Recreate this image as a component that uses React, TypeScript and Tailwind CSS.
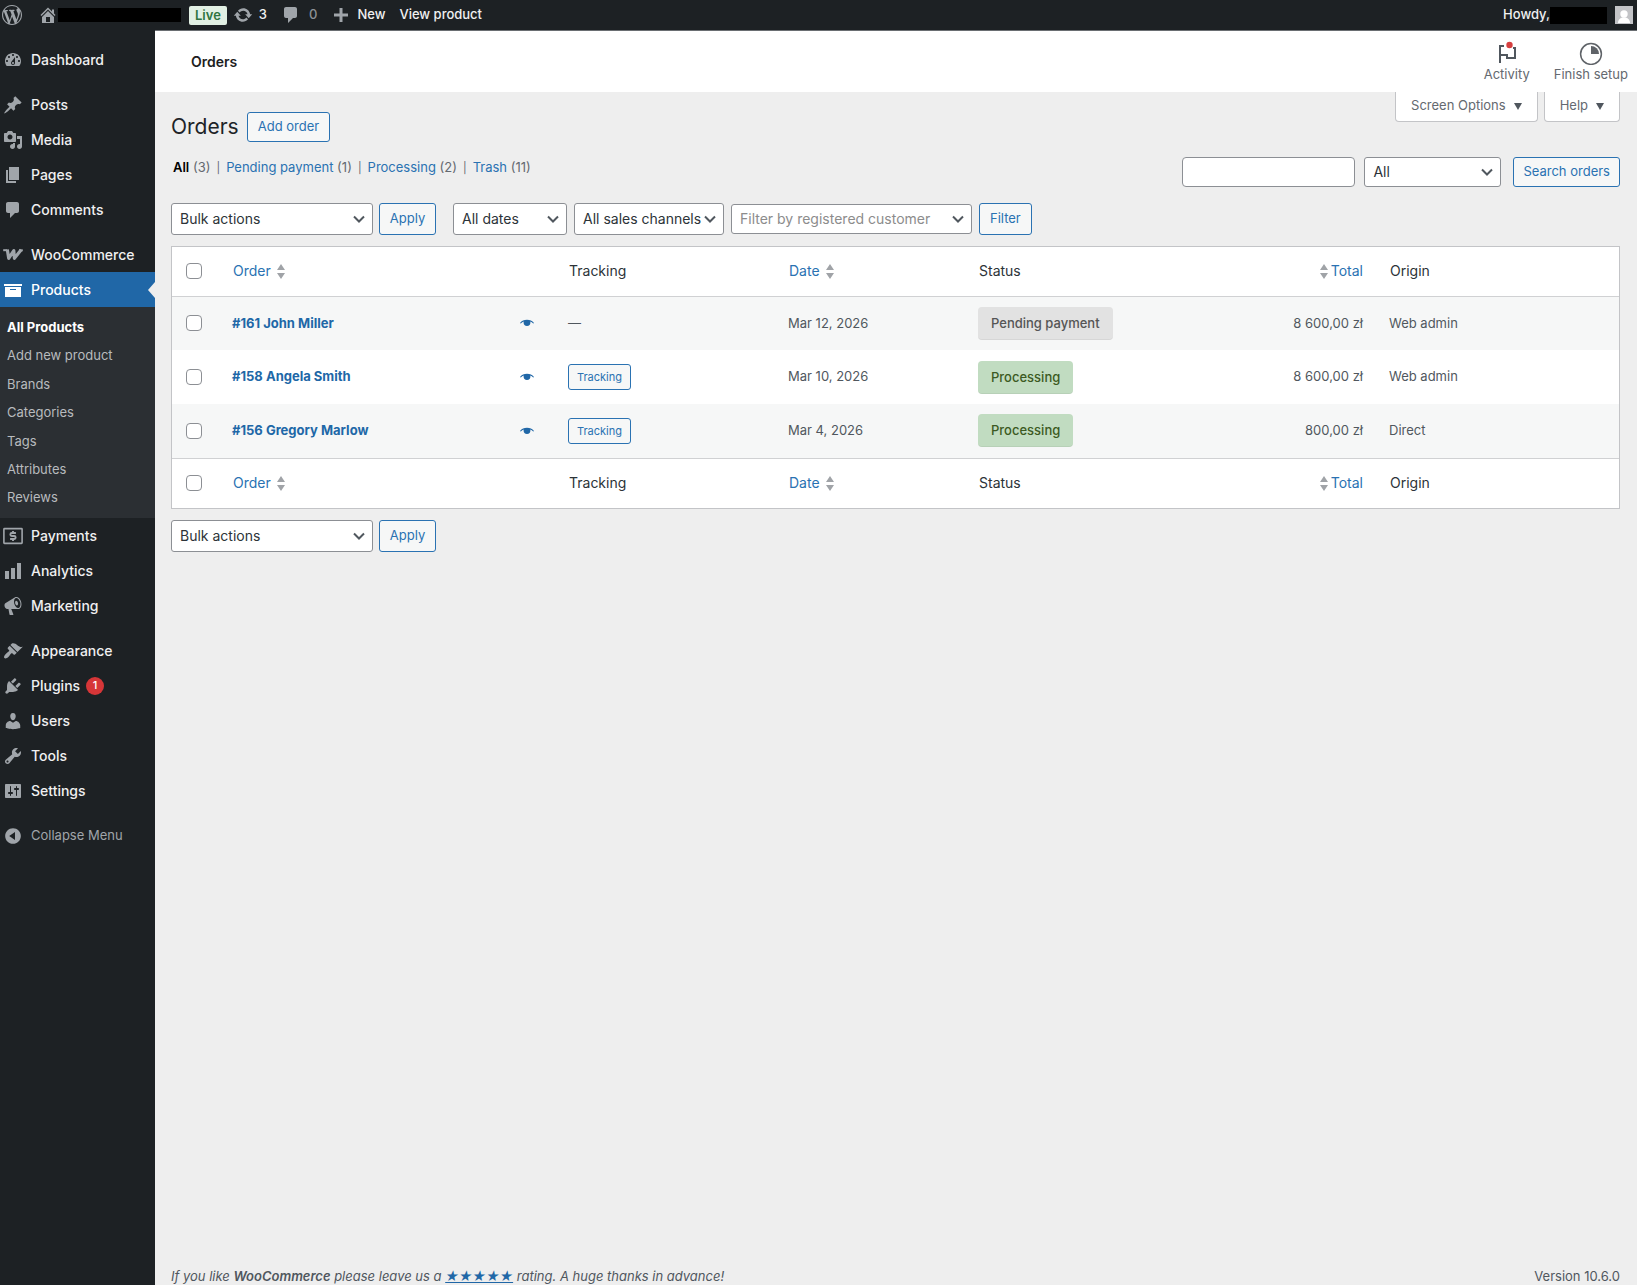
import { useState } from "react";
import { clsx } from "clsx";

import type { ReactNode } from "react";

type Order = {
  id: number;
  customer: string;
  tracking: boolean;
  date: string;
  status: "pending" | "processing";
  total: string;
  origin: string;
};

type MenuItem = { label: string; icon: ReactNode; badge?: number };

const ICONS = {
  wordpress:
    "M20 10c0-5.51-4.49-10-10-10C4.48 0 0 4.49 0 10c0 5.52 4.48 10 10 10 5.51 0 10-4.48 10-10zM7.78 15.37L4.37 6.22c.55-.02 1.17-.08 1.17-.08.5-.06.44-1.13-.06-1.11 0 0-1.45.11-2.37.11-.18 0-.37 0-.58-.01C4.12 2.69 6.87 1.11 10 1.11c2.33 0 4.45.87 6.05 2.34-.68-.11-1.65.39-1.65 1.58 0 .74.45 1.36.9 2.1.35.61.55 1.36.55 2.46 0 1.49-1.4 5-1.4 5l-3.03-8.37c.54-.02.82-.17.82-.17.5-.05.44-1.25-.06-1.22 0 0-1.44.12-2.38.12-.87 0-2.33-.12-2.33-.12-.5-.03-.56 1.2-.06 1.22l.92.08 1.26 3.41zM17.41 10c.24-.64.74-1.87.43-4.25.7 1.29 1.05 2.71 1.05 4.25 0 3.29-1.73 6.24-4.4 7.78.97-2.59 1.94-5.2 2.92-7.78zM6.1 18.09C3.12 16.65 1.11 13.53 1.11 10c0-1.3.23-2.48.72-3.59C3.25 10.3 4.67 14.2 6.1 18.09zm4.03-6.63l2.58 6.98c-.86.29-1.76.45-2.71.45-.79 0-1.57-.11-2.29-.33.81-2.38 1.62-4.74 2.42-7.1z",
  home: "M16 8.5l1.53 1.53-1.06 1.06L10 4.6l-6.47 6.49-1.06-1.06L10 2.5l4 4v-2h2v4zm-6-2.46l6 5.99V18H4v-5.97zM12 17v-5H8v5h4z",
  update:
    "M10.2 3.28c3.53 0 6.43 2.61 6.92 6h2.08l-3.5 4-3.5-4h2.32c-.45-1.97-2.21-3.45-4.32-3.45-1.45 0-2.73.71-3.54 1.78L4.95 5.66C6.23 4.2 8.11 3.28 10.2 3.28zm-.4 13.44c-3.52 0-6.43-2.61-6.92-6H.8l3.5-4c1.17 1.33 2.33 2.67 3.5 4H5.48c.45 1.97 2.21 3.45 4.32 3.45 1.45 0 2.73-.71 3.54-1.78l1.71 1.95c-1.28 1.46-3.15 2.38-5.25 2.38z",
  plus: "M17 8.5v3h-5.5V17h-3v-5.5H3v-3h5.5V3h3v5.5H17z",
  dashboard:
    "M3.76 16h12.48c1.1-1.37 1.76-3.11 1.76-5 0-4.42-3.58-8-8-8s-8 3.58-8 8c0 1.89.66 3.63 1.76 5zM10 4c.55 0 1 .45 1 1s-.45 1-1 1-1-.45-1-1 .45-1 1-1zM6 6c.55 0 1 .45 1 1s-.45 1-1 1-1-.45-1-1 .45-1 1-1zm8 0c.55 0 1 .45 1 1s-.45 1-1 1-1-.45-1-1 .45-1 1-1zm-5.37 5.55L12 7v6c0 1.1-.9 2-2 2s-2-.9-2-2c0-.57.24-1.08.63-1.45zM4 10c.55 0 1 .45 1 1s-.45 1-1 1-1-.45-1-1 .45-1 1-1zm12 0c.55 0 1 .45 1 1s-.45 1-1 1-1-.45-1-1 .45-1 1-1zm-5 3c0-.55-.45-1-1-1s-1 .45-1 1 .45 1 1 1 1-.45 1-1z",
  post: "M10.44 3.02l1.82-1.82 6.36 6.35-1.83 1.82c-1.05-.68-2.48-.57-3.41.36l-.75.75c-.92.93-1.04 2.35-.35 3.41l-1.83 1.82-2.41-2.41-2.8 2.79c-.42.42-3.38 2.71-3.8 2.29s1.86-3.39 2.28-3.81l2.79-2.79L4.1 9.36l1.83-1.82c1.05.69 2.48.57 3.4-.36l.75-.75c.93-.92 1.05-2.35.36-3.41z",
  media:
    "M13 11V4c0-.55-.45-1-1-1h-1.67L9 1H5L3.67 3H2c-.55 0-1 .45-1 1v7c0 .55.45 1 1 1h10c.55 0 1-.45 1-1zM7 4.5c1.38 0 2.5 1.12 2.5 2.5S8.38 9.5 7 9.5 4.5 8.38 4.5 7 5.62 4.5 7 4.5zM14 6h5v10.5c0 1.38-1.12 2.5-2.5 2.5S14 17.88 14 16.5s1.12-2.5 2.5-2.5c.17 0 .34.02.5.05V9h-3V6zm-4 8.05V13h2v3.5c0 1.38-1.12 2.5-2.5 2.5S7 17.88 7 16.5 8.12 14 9.5 14c.17 0 .34.02.5.05z",
  page: "M6 15V2h10v13H6zm-1 1h8v2H3V5h2v11z",
  comment:
    "M5 2h9c1.1 0 2 .9 2 2v7c0 1.1-.9 2-2 2h-2l-5 5v-5H5c-1.1 0-2-.9-2-2V4c0-1.1.9-2 2-2z",
  archive: "M19 4v2H1V4h18zM2 7h16v10H2V7zm11 3V9H7v1h6z",
  chart: "M18 18V2h-4v16h4zm-6 0V7H8v11h4zm-6 0v-8H2v8h4z",
  megaphone:
    "M18.15 5.94c.46 1.62.38 3.22-.02 4.48-.42 1.28-1.26 2.18-2.3 2.48-.16.06-.26.06-.4.06-.06.02-.12.02-.18.02-.06.02-.14.02-.22.02h-6.8l2.22 5.5c.02.14-.06.26-.14.34-.08.1-.24.16-.34.16H6.95c-.1 0-.26-.06-.34-.16-.08-.08-.16-.2-.14-.34l-1-5.5H4.25l-.02-.02c-.5.06-1.08-.18-1.54-.62s-.88-1.08-1.06-1.88c-.24-.8-.2-1.56-.02-2.2.18-.62.58-1.08 1.06-1.3l.02-.02 9-5.4c.1-.06.18-.1.24-.16.06-.04.14-.08.24-.12.16-.08.28-.12.5-.18 1.04-.3 2.24.1 3.22.98s1.84 2.24 2.26 3.86zm-2.58 5.98h-.02c.4-.1.74-.34 1.04-.7.58-.7.86-1.76.86-3.04 0-.64-.1-1.3-.28-1.98-.34-1.36-1.02-2.5-1.78-3.24s-1.68-1.1-2.46-.88c-.82.22-1.4.96-1.7 2-.32 1.04-.28 2.36.06 3.72.38 1.36 1 2.5 1.8 3.24.78.74 1.62 1.1 2.48.88zm-2.54-7.08c.22-.04.42-.02.62.04.38.16.76.48 1.02 1s.42 1.2.42 1.78c0 .3-.04.56-.12.8-.18.48-.44.84-.86.94-.34.1-.8-.06-1.14-.4s-.64-.86-.78-1.5c-.18-.62-.12-1.24.02-1.72s.48-.84.82-.94z",
  appearance:
    "M14.48 11.06L7.41 3.99l1.5-1.5c.5-.56 2.3-.47 3.51.32 1.21.8 1.43 1.28 2.91 2.1 1.18.64 2.45 1.26 4.45.85zm-.71.71L6.7 4.7 4.93 6.47c-.39.39-.39 1.02 0 1.41l1.06 1.06c.39.39.39 1.03 0 1.42-.6.6-1.43 1.11-2.21 1.69-.35.26-.7.53-1.01.84C1.43 14.23.4 16.08 1.4 17.07c.99 1 2.84-.03 4.18-1.36.31-.31.58-.66.85-1.02.57-.78 1.08-1.61 1.69-2.21.39-.39 1.02-.39 1.41 0l1.06 1.06c.39.39 1.02.39 1.41 0z",
  plugins:
    "M13.11 4.36L9.87 7.6 8 5.73l3.24-3.24c.35-.34 1.05-.2 1.56.32.52.51.66 1.21.31 1.55zm-8 1.77l.91-1.12 9.01 9.01-1.19.84c-.71.71-2.63 1.16-3.82 1.16H6.14L4.9 17.26c-.59.59-1.54.59-2.12 0-.59-.58-.59-1.53 0-2.12l1.24-1.24v-3.88c0-1.13.4-3.19 1.09-3.89zm7.26 3.97l3.24-3.24c.34-.35 1.04-.21 1.55.31.52.51.66 1.21.31 1.55l-3.24 3.25z",
  users:
    "M10 9.25c-2.27 0-2.73-3.44-2.73-3.44C7 4.02 7.82 2 9.97 2c2.16 0 2.98 2.02 2.71 3.81 0 0-.41 3.44-2.68 3.44zm0 2.57L12.72 10c2.39 0 4.52 2.33 4.52 4.53v2.49s-3.65 1.13-7.24 1.13c-3.65 0-7.24-1.13-7.24-1.13v-2.49c0-2.25 1.94-4.48 4.47-4.48z",
  tools:
    "M16.68 9.77c-1.34 1.34-3.3 1.67-4.95.99l-5.41 6.52c-.99.99-2.59.99-3.58 0s-.99-2.59 0-3.57l6.52-5.42c-.68-1.65-.35-3.61.99-4.95 1.28-1.28 3.12-1.62 4.72-1.06l-2.89 2.89 2.82 2.82 2.86-2.87c.53 1.58.18 3.39-1.08 4.65zM3.81 16.21c.4.39 1.04.39 1.43 0 .4-.4.4-1.04 0-1.43-.39-.4-1.03-.4-1.43 0-.39.39-.39 1.03 0 1.43z",
  settings:
    "M18 16V4c0-.55-.45-1-1-1H3c-.55 0-1 .45-1 1v12c0 .55.45 1 1 1h14c.55 0 1-.45 1-1zM8 11h1c.55 0 1 .45 1 1s-.45 1-1 1H8v1.5c0 .28-.22.5-.5.5s-.5-.22-.5-.5V13H6c-.55 0-1-.45-1-1s.45-1 1-1h1V5.5c0-.28.22-.5.5-.5s.5.22.5.5V11zm5-2h-1c-.55 0-1-.45-1-1s.45-1 1-1h1V5.5c0-.28.22-.5.5-.5s.5.22.5.5V7h1c.55 0 1 .45 1 1s-.45 1-1 1h-1v5.5c0 .28-.22.5-.5.5s-.5-.22-.5-.5V9z",
  collapse:
    "M10 2.16c4.33 0 7.84 3.51 7.84 7.84s-3.51 7.84-7.84 7.84S2.16 14.33 2.16 10 5.71 2.16 10 2.16zm2 11.72V6.12L6.18 9.97z",
};

function Icon({ name, className }: { name: keyof typeof ICONS; className?: string }) {
  return (
    <svg viewBox="0 0 20 20" fill="currentColor" className={clsx("size-5 shrink-0", className)} aria-hidden="true">
      <path fillRule="evenodd" d={ICONS[name]} />
    </svg>
  );
}

function WooIcon() {
  return (
    <svg viewBox="0 0 20 20" fill="none" stroke="currentColor" className="size-5 shrink-0" aria-hidden="true">
      <path d="M.2 5.200h4" strokeWidth="2" />
      <path d="M4.300 4.500l1.400 8.800L10.800 5.600l.6 7.700 6.800-8.500" strokeWidth="3.200" strokeLinejoin="round" />
      <path d="M16 5.300h3.800" strokeWidth="2" />
    </svg>
  );
}

function PaymentsIcon() {
  return (
    <svg viewBox="0 0 20 20" fill="none" stroke="currentColor" className="size-5 shrink-0" aria-hidden="true">
      <rect x=".9" y="2.600" width="18.200" height="14.800" rx=".6" strokeWidth="1.600" />
      <path
        d="M12.900 7H8.800c-1.900 0-1.900 3 0 3h2.400c1.900 0 1.900 3 0 3H7.100M10 5v2M10 13v2"
        strokeWidth="1.900"
      />
    </svg>
  );
}

const MENU_TOP: MenuItem[][] = [
  [{ label: "Dashboard", icon: <Icon name="dashboard" /> }],
  [
    { label: "Posts", icon: <Icon name="post" /> },
    { label: "Media", icon: <Icon name="media" /> },
    { label: "Pages", icon: <Icon name="page" /> },
    { label: "Comments", icon: <Icon name="comment" /> },
  ],
  [{ label: "WooCommerce", icon: <WooIcon /> }],
];

const MENU_BOTTOM: MenuItem[][] = [
  [
    { label: "Payments", icon: <PaymentsIcon /> },
    { label: "Analytics", icon: <Icon name="chart" /> },
    { label: "Marketing", icon: <Icon name="megaphone" /> },
  ],
  [
    { label: "Appearance", icon: <Icon name="appearance" /> },
    { label: "Plugins", icon: <Icon name="plugins" />, badge: 1 },
    { label: "Users", icon: <Icon name="users" /> },
    { label: "Tools", icon: <Icon name="tools" /> },
    { label: "Settings", icon: <Icon name="settings" /> },
  ],
];

const SUBMENU = ["All Products", "Add new product", "Brands", "Categories", "Tags", "Attributes", "Reviews"];

const ORDERS: Order[] = [
  { id: 161, customer: "John Miller", tracking: false, date: "Mar 12, 2026", status: "pending", total: "8 600,00 zł", origin: "Web admin" },
  { id: 158, customer: "Angela Smith", tracking: true, date: "Mar 10, 2026", status: "processing", total: "8 600,00 zł", origin: "Web admin" },
  { id: 156, customer: "Gregory Marlow", tracking: true, date: "Mar 4, 2026", status: "processing", total: "800,00 zł", origin: "Direct" },
];

const VIEWS = [
  { label: "All", count: 3, current: true },
  { label: "Pending payment", count: 1 },
  { label: "Processing", count: 2 },
  { label: "Trash", count: 11 },
];

function AdminBar() {
  return (
    <header className="flex h-[30px] items-center bg-[#1d2124] pr-1 text-[13px] font-medium text-[#f0f0f1]">
      <a href="#wp" aria-label="About WordPress" className="ml-[2px] text-[#a0a5aa]">
        <Icon name="wordpress" />
      </a>
      <a href="#site" aria-label="Visit site" className="ml-4 flex items-center text-[#a0a5aa]">
        <Icon name="home" />
        <span className="h-[14px] w-[123px] bg-black" />
      </a>
      <span className="ml-2 rounded-[2px] bg-[#e2f0e4] px-[6px] font-semibold leading-[19px] text-[#2f7440]">
        Live
      </span>
      <a href="#updates" className="ml-[6px] flex items-center gap-[6px]">
        <Icon name="update" className="text-[#a0a5aa]" />3
      </a>
      <a href="#comments" className="ml-[14px] flex items-center gap-2 text-[#8c9196]">
        <Icon name="comment" className="text-[#a0a5aa]" />0
      </a>
      <a href="#new" className="ml-[14px] flex items-center gap-[6px]">
        <Icon name="plus" className="text-[#a0a5aa]" />
        New
      </a>
      <a href="#view" className="ml-[14px]">
        View product
      </a>
      <a href="#profile" className="ml-auto flex items-center">
        Howdy,
        <span className="h-[17px] w-[57px] bg-black" />
        <svg viewBox="0 0 18 18" className="ml-2 size-[18px]" aria-hidden="true">
          <rect width="18" height="18" fill="#c3c4c7" />
          <circle cx="9" cy="8" r="3.700" fill="#fff" />
          <path d="M3 17c0-3.500 2.400-5.500 6-5.500s6 2 6 5.500z" fill="#fff" />
        </svg>
      </a>
    </header>
  );
}

function MenuGroup({ items }: { items: MenuItem[] }) {
  return (
    <ul className="mb-[10px]">
      {items.map((item) => (
        <li key={item.label}>
          <a href={`#${item.label}`} className="flex h-[35px] items-center gap-2 pl-[3px] text-[#f0f0f1]">
            <span className="text-[#a0a5aa]">{item.icon}</span>
            {item.label}
            {item.badge && (
              <span className="-ml-[2px] flex size-[18px] items-center justify-center rounded-full bg-[#d63638] text-[11px] text-white">
                {item.badge}
              </span>
            )}
          </a>
        </li>
      ))}
    </ul>
  );
}

function Sidebar() {
  return (
    <nav aria-label="Main menu" className="w-[155px] shrink-0 bg-[#1d2124] pt-3 text-sm font-medium">
      {MENU_TOP.map((items, idx) => (
        <div key={items[0]!.label} className={clsx(idx === MENU_TOP.length - 1 && "-mb-[10px]")}>
          <MenuGroup items={items} />
        </div>
      ))}

      {/* Open section with its submenu */}
      <a href="#Products" className="relative flex h-[35px] items-center gap-2 bg-[#2067a7] pl-[3px] text-white">
        <Icon name="archive" />
        Products
        <svg viewBox="0 0 7 16" className="absolute right-0 h-4 w-[7px]" fill="#eeeeee" aria-hidden="true">
          <path d="M7 0v16L0 8z" />
        </svg>
      </a>
      <ul className="flex h-[211px] flex-col bg-[#2b2f33] py-[6px] text-[13px] font-normal text-[#b8bbbe]">
        {SUBMENU.map((label, idx) => (
          <li key={label} className="flex flex-1 items-center">
            <a href={`#${label}`} className={clsx("pl-[7px]", idx === 0 && "font-bold text-white")}>
              {label}
            </a>
          </li>
        ))}
      </ul>

      {MENU_BOTTOM.map((items) => (
        <MenuGroup key={items[0]!.label} items={items} />
      ))}
      <button type="button" className="flex h-[35px] items-center gap-2 pl-[3px] text-[13px] font-normal text-[#a0a5aa]">
        <Icon name="collapse" />
        Collapse Menu
      </button>
    </nav>
  );
}

function PageHeader() {
  return (
    <div className="flex h-[62px] items-center border-t border-[#6a6e72] bg-white pl-9 pr-[9px]">
      <h2 className="text-sm font-semibold text-[#1e1e1e]">Orders</h2>
      <div className="ml-auto flex gap-6 text-[13px] leading-[18px] text-[#646970]">
        <button type="button" className="flex flex-col items-center">
          <svg viewBox="0 0 24 24" className="size-6" fill="none" stroke="#50575e" strokeWidth="2" aria-hidden="true">
            <path d="M9 5H5v17M5 14h7v3h8V7h-2" />
            <circle cx="14.500" cy="4" r="3.200" fill="#d63f3f" stroke="none" />
          </svg>
          Activity
        </button>
        <button type="button" className="flex flex-col items-center">
          <svg viewBox="0 0 24 24" className="size-6" aria-hidden="true">
            <circle cx="12" cy="13" r="10.400" fill="none" stroke="#5f6368" strokeWidth="1.500" />
            <path d="M12 13V5a8 8 0 0 1 8 8z" fill="#5f6368" />
          </svg>
          Finish setup
        </button>
      </div>
    </div>
  );
}

function ScreenTab({ label }: { label: string }) {
  return (
    <button
      type="button"
      className="flex h-[30px] items-center gap-2 rounded-b-[4px] border border-t-0 border-[#c3c4c7] bg-white px-[15px] pb-px text-[13px] text-[#646970]"
    >
      {label}
      <svg viewBox="0 0 8 7" className="h-[7px] w-2" fill="#50575e" aria-hidden="true">
        <path d="M0 0h8L4 7z" />
      </svg>
    </button>
  );
}

function Button({ children, className }: { children: ReactNode; className: string }) {
  return (
    <button
      type="button"
      className={clsx("whitespace-nowrap rounded-[3px] border border-[#2a72b2] bg-[#f6f7f7] text-[#2a72b2]", className)}
    >
      {children}
    </button>
  );
}

function Select({ label, value, className }: { label: string; value: string; className: string }) {
  return (
    <div className="relative">
      <select
        aria-label={label}
        className={clsx("appearance-none rounded-[3px] border border-[#8c8f94] bg-white pl-2 pr-5 text-sm", className)}
      >
        <option>{value}</option>
      </select>
      <svg
        viewBox="0 0 12 8"
        className="pointer-events-none absolute right-2 top-1/2 h-2 w-3 -translate-y-1/2"
        fill="none"
        stroke="#50575e"
        strokeWidth="2"
        aria-hidden="true"
      >
        <path d="M1 1.500l5 5 5-5" />
      </svg>
    </div>
  );
}

function BulkActions() {
  return (
    <div className="flex gap-[6px]">
      <Select label="Select bulk action" value="Bulk actions" className="h-8 w-[202px] text-[#2c3338]" />
      <Button className="h-8 w-[57px] text-[13px]">Apply</Button>
    </div>
  );
}

function Checkbox({ label, checked, onChange }: { label: string; checked: boolean; onChange: () => void }) {
  return (
    <input
      type="checkbox"
      aria-label={label}
      checked={checked}
      onChange={onChange}
      className="block size-4 appearance-none rounded-[4px] border border-[#8c8f94] bg-white checked:bg-[#2067a7]"
    />
  );
}

function SortIcon() {
  return (
    <svg viewBox="0 0 8 15" className="h-[15px] w-2" fill="#a0a3a7" aria-hidden="true">
      <path d="M4 0l4 6H0zM4 15l4-6H0z" />
    </svg>
  );
}

function HeadRow({ checked, onToggle, className }: { checked: boolean; onToggle: () => void; className: string }) {
  return (
    <tr className={clsx("bg-white text-left text-sm text-[#2c3338]", className)}>
      <td className="pl-[14px]">
        <Checkbox label="Select all" checked={checked} onChange={onToggle} />
      </td>
      <th scope="col" className="pl-[11px] font-normal">
        <a href="#sort-order" className="flex items-center gap-[6px] text-[#2a72b2]">
          Order
          <SortIcon />
        </a>
      </th>
      <th scope="col" className="pl-[11px] font-normal">Tracking</th>
      <th scope="col" className="pl-[11px] font-normal">
        <a href="#sort-date" className="flex items-center gap-[6px] text-[#2a72b2]">
          Date
          <SortIcon />
        </a>
      </th>
      <th scope="col" className="pl-[11px] font-normal">Status</th>
      <th scope="col" className="pr-4 font-normal">
        <a href="#sort-total" className="flex items-center justify-end gap-[3px] text-[#2a72b2]">
          <SortIcon />
          Total
        </a>
      </th>
      <th scope="col" className="pl-[11px] font-normal">Origin</th>
    </tr>
  );
}

function StatusPill({ status }: { status: Order["status"] }) {
  return (
    <mark
      className={clsx(
        "inline-block rounded-[4px] border-b border-black/5 px-[13px] align-middle font-medium leading-8",
        status === "pending" ? "bg-[#e2e2e2] text-[#555555]" : "bg-[#c1dcc1] text-[#3c5a23]",
      )}
    >
      {status === "pending" ? "Pending payment" : "Processing"}
    </mark>
  );
}

function OrdersTable() {
  const [selected, setSelected] = useState<number[]>([]);
  const allSelected = selected.length === ORDERS.length;

  const toggle = (id: number) =>
    setSelected((prev) => (prev.includes(id) ? prev.filter((x) => x !== id) : [...prev, id]));
  const toggleAll = () => setSelected(allSelected ? [] : ORDERS.map((order) => order.id));

  return (
    <div className="mt-[11px] border border-[#c3c4c7]">
      <table className="w-full table-fixed">
        <colgroup>
          <col className="w-[50px]" />
          <col />
          <col className="w-[220px]" />
          <col className="w-[190px]" />
          <col className="w-[220px]" />
          <col className="w-[191px]" />
          <col className="w-[240px]" />
        </colgroup>
        <thead>
          <HeadRow checked={allSelected} onToggle={toggleAll} className="h-[49px] border-b border-[#d0d1d3]" />
        </thead>
        <tbody className="text-[13px] text-[#50575e]">
          {ORDERS.map((order) => (
            <tr key={order.id} className="h-[54px] odd:bg-[#f6f7f7] even:bg-white">
              <td className="pl-[14px]">
                <Checkbox
                  label={`Select order ${order.id}`}
                  checked={selected.includes(order.id)}
                  onChange={() => toggle(order.id)}
                />
              </td>
              <td className="pl-[10px] pr-6">
                <div className="flex items-center justify-between text-[#2067a7]">
                  <a href={`#order-${order.id}`} className="font-bold">
                    #{order.id} {order.customer}
                  </a>
                  <button type="button" aria-label={`Preview order ${order.id}`}>
                    <svg viewBox="0 0 14 8" className="h-2 w-[14px]" fill="currentColor" aria-hidden="true">
                      <path d="M0 4C1.700 1.900 4.100.8 7 .8S12.300 1.900 14 4l-.8.5C12.300 3.600 11.300 3 10.200 2.600c.1.300.2.600.2 1a3.400 3.400 0 0 1-6.800 0c0-.4.1-.7.2-1C2.700 3 1.700 3.600.8 4.500z" />
                    </svg>
                  </button>
                </div>
              </td>
              <td className="pl-[10px]">
                {order.tracking ? <Button className="h-[26px] px-2 text-[11px]">Tracking</Button> : "—"}
              </td>
              <td className="pl-[10px]">{order.date}</td>
              <td className="pl-[10px]">
                <StatusPill status={order.status} />
              </td>
              <td className="pr-4 text-right">{order.total}</td>
              <td className="pl-[10px]">{order.origin}</td>
            </tr>
          ))}
        </tbody>
        <tfoot>
          <HeadRow checked={allSelected} onToggle={toggleAll} className="h-[50px] border-t border-[#d0d1d3]" />
        </tfoot>
      </table>
    </div>
  );
}

export default function App() {
  return (
    <div className="flex min-h-screen flex-col bg-[#eeeeee] font-[Inter,'Liberation_Sans',sans-serif]">
      <AdminBar />
      <div className="flex flex-1">
        <Sidebar />
        <div className="flex min-w-0 flex-1 flex-col">
          <PageHeader />
          <main className="flex-1 pl-4 pr-[17px]">
            <div className="flex justify-between">
              <div className="flex items-center gap-2 pt-5">
                <h1 className="text-[21px] leading-[30px] text-[#1d2327]">Orders</h1>
                <Button className="h-[30px] px-[10px] text-[13px]">Add order</Button>
              </div>
              <div className="flex items-start gap-[6px]">
                <ScreenTab label="Screen Options" />
                <ScreenTab label="Help" />
              </div>
            </div>

            <div className="mt-[15px] flex justify-between">
              <ul className="flex pl-[2px] text-[13px] leading-5 text-[#646970]">
                {VIEWS.map((view, idx) => (
                  <li key={view.label}>
                    {idx > 0 && <span className="px-[6px] text-[11px]">|</span>}
                    <a
                      href={`#${view.label}`}
                      className={view.current ? "font-semibold text-black" : "text-[#2a72b2]"}
                    >
                      {view.label}
                    </a>{" "}
                    ({view.count})
                  </li>
                ))}
              </ul>
              <div className="flex">
                <input
                  type="search"
                  aria-label="Search orders"
                  className="h-[30px] w-[173px] rounded-[4px] border border-[#8c8f94] bg-white px-2 text-sm"
                />
                <div className="ml-[9px] mr-3">
                  <Select label="Search in" value="All" className="h-[30px] w-[137px] text-[#2c3338]" />
                </div>
                <Button className="h-[30px] px-[9px] text-[13px]">Search orders</Button>
              </div>
            </div>

            <div className="mt-4 flex items-center gap-[7px]">
              <div className="mr-[10px]">
                <BulkActions />
              </div>
              <Select label="Filter by date" value="All dates" className="h-8 w-[114px] text-[#2c3338]" />
              <Select label="Filter by channel" value="All sales channels" className="h-8 w-[150px] text-[#2c3338]" />
              <Select
                label="Customer"
                value="Filter by registered customer"
                className="h-[30px] w-[241px] text-[#8c8c8c]"
              />
              <Button className="h-8 px-[10px] text-[13px]">Filter</Button>
            </div>

            <OrdersTable />

            <div className="mt-[11px]">
              <BulkActions />
            </div>
          </main>

          <footer className="flex justify-between pl-4 pr-[17px] text-[13px] leading-[18px] text-[#50575e]">
            <p className="italic">
              If you like <strong className="font-semibold">WooCommerce</strong> please leave us a{" "}
              <a href="#rate" className="text-[#2067a7] underline">
                ★★★★★
              </a>{" "}
              rating. A huge thanks in advance!
            </p>
            <p>Version 10.6.0</p>
          </footer>
        </div>
      </div>
    </div>
  );
}
